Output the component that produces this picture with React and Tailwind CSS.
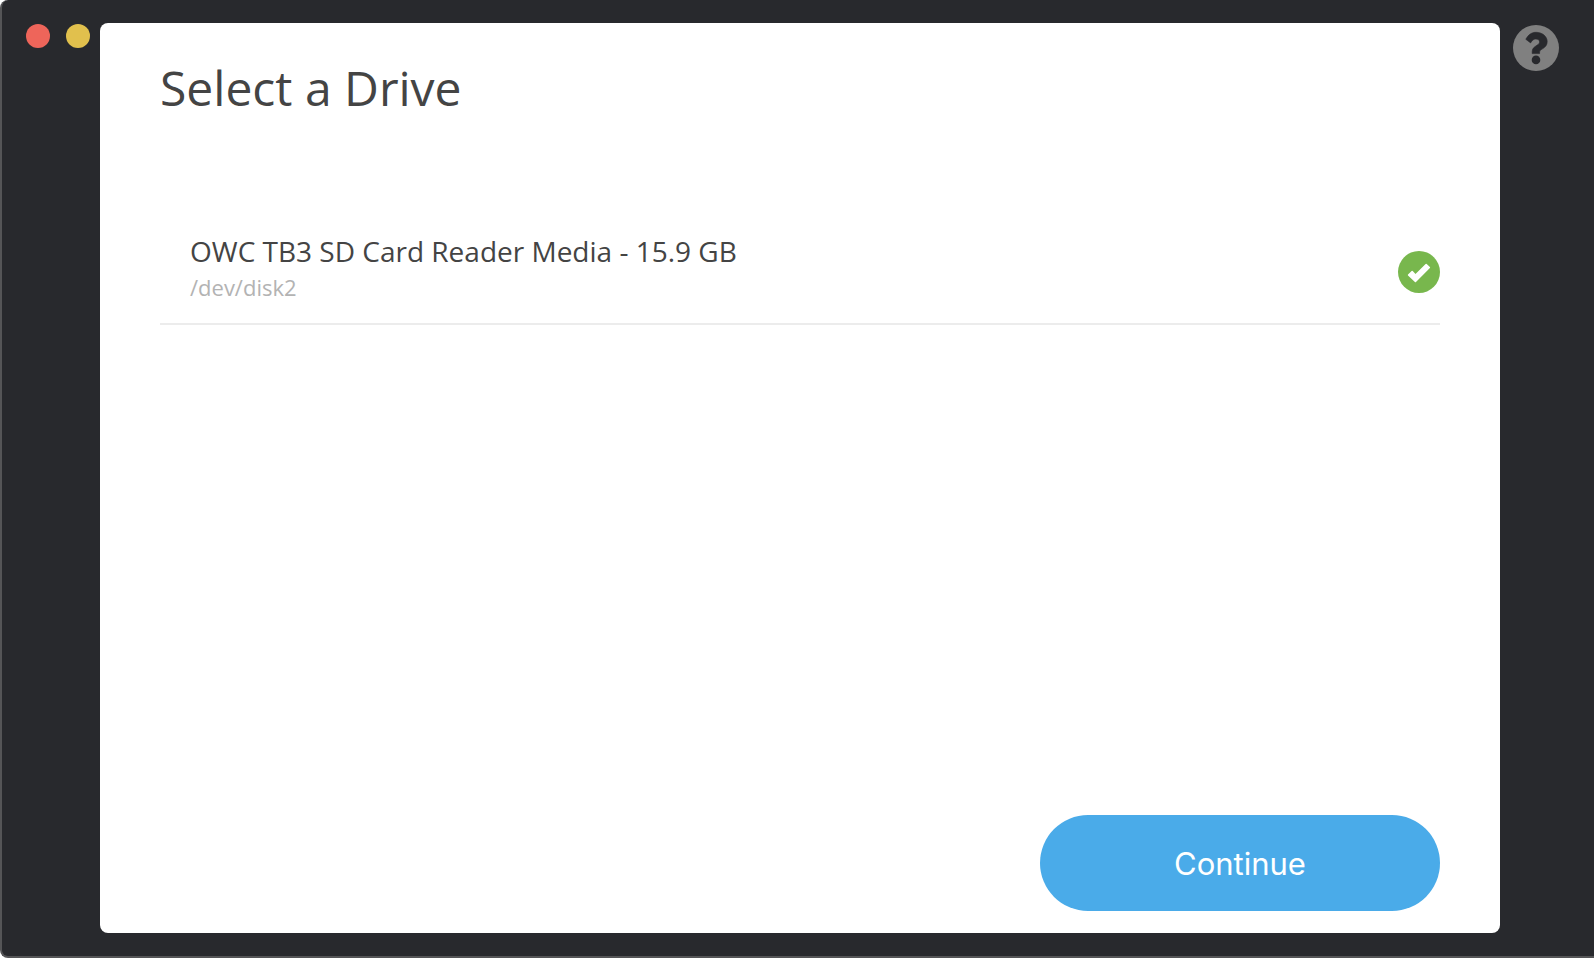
const drives = [
  { name: "OWC TB3 SD Card Reader Media - 15.9 GB", device: "/dev/disk2" },
];

function HelpIcon() {
  return (
    <svg viewBox="0 0 46 46" className="size-[46px]" aria-hidden="true">
      <circle cx="23" cy="23" r="23" fill="#808080" />
      <path
        d="M12.8 14.3C15.3 9.8 18.5 7.3 23.2 7.3C28.8 7.3 34.2 11 34.2 16.6C34.2 23.8 26.6 23.7 26.6 27V28.6H19.2V26.5C19.2 20.8 26.6 20.6 26.6 17C26.6 15 25 14 22.8 14C20.6 14 19.3 15.2 17.6 17.9Z"
        fill="#28292d"
        stroke="#28292d"
        strokeWidth="0.6"
        strokeLinejoin="round"
      />
      <circle cx="23" cy="34.9" r="4.3" fill="#28292d" />
    </svg>
  );
}

function SelectedMark() {
  return (
    <svg viewBox="0 0 42 42" className="size-[42px] shrink-0" aria-hidden="true">
      <circle cx="21" cy="21" r="21" fill="#78b74d" />
      <path
        d="M10 23.6 13.6 20Q14.2 19.6 14.7 20L17.5 23 27.6 12.9Q28.2 12.5 28.7 12.9L31.9 16Q32.4 16.6 31.9 17.1L18 31Q17.4 31.5 16.9 31L10 24.6Q9.6 24.1 10 23.6Z"
        fill="#fff"
      />
    </svg>
  );
}

function DriveRow({ drive }) {
  return (
    <li className="border-b-2 border-[#ececec]">
      <label className="flex cursor-pointer items-end justify-between pb-[30px] pl-[30px]">
        <input type="radio" name="drive" defaultChecked className="sr-only" />
        <span className="-mb-3 flex flex-col">
          <span className="text-[28px] leading-9 text-[#444444]">{drive.name}</span>
          <span className="text-[22px] leading-9 text-[#b3b3b3]">{drive.device}</span>
        </span>
        <SelectedMark />
      </label>
    </li>
  );
}

export default function App() {
  return (
    <div className="flex min-h-screen items-stretch overflow-hidden rounded-l-lg border-b-2 border-l-2 border-[#555557] bg-[#28292d] pt-[23px] pb-[23px] font-['Open_Sans',sans-serif]">
      <div className="flex w-[98px] shrink-0 items-start gap-4 pl-6 pt-px">
        <button type="button" aria-label="Close" className="size-6 rounded-full bg-[#ee655a]" />
        <button type="button" aria-label="Minimize" className="size-6 rounded-full bg-[#e1c04d]" />
      </div>

      <main className="flex flex-1 flex-col rounded-lg bg-white px-[60px] pb-[22px] pt-8">
        <h1 className="text-[48px] leading-[66px] text-[#444444]">Select a Drive</h1>
        <ul className="mt-28 flex-1">
          {drives.map((drive) => (
            <DriveRow key={drive.device} drive={drive} />
          ))}
        </ul>
        <button
          type="button"
          className="h-24 w-[400px] self-end rounded-full bg-[#4aabe9] pt-0.5 font-['Inter',sans-serif] text-[31px] text-white"
        >
          Continue
        </button>
      </main>

      <div className="flex w-[94px] shrink-0 items-start pl-[13px] pt-0.5">
        <button type="button" aria-label="Help">
          <HelpIcon />
        </button>
      </div>
    </div>
  );
}
